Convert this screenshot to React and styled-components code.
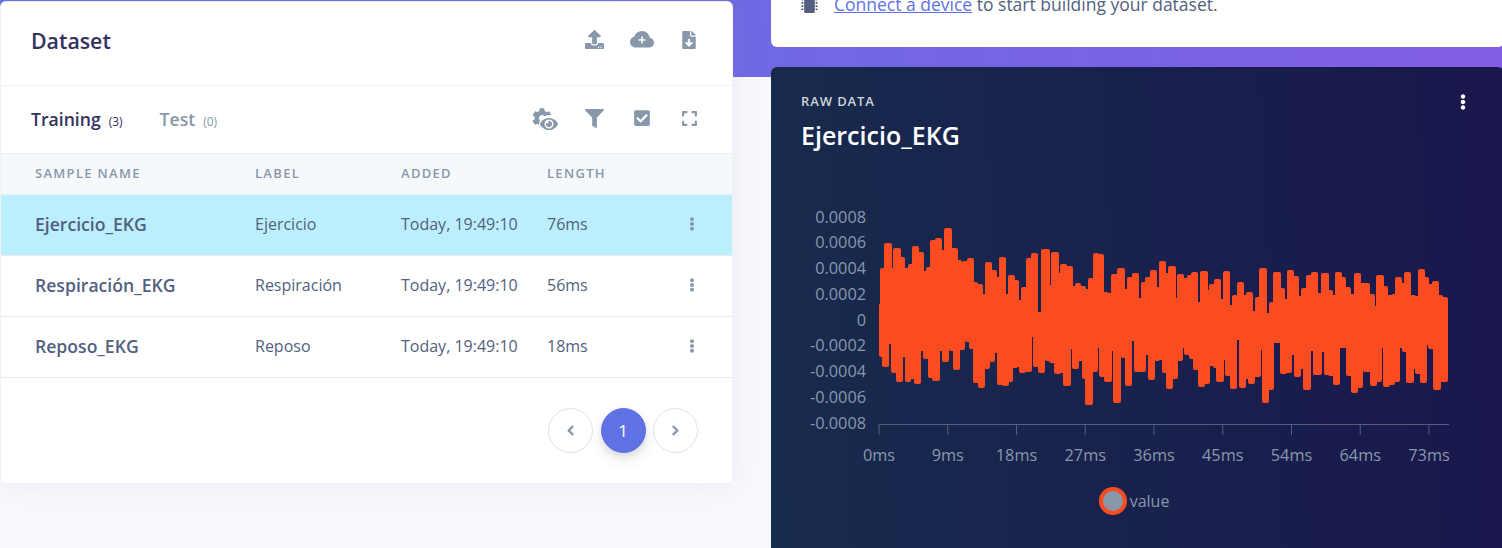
import styled, { createGlobalStyle } from "styled-components";
import {
  FaUpload,
  FaFileDownload,
  FaCog,
  FaEye,
  FaFilter,
  FaCheckSquare,
  FaExpand,
  FaChevronLeft,
  FaChevronRight,
  FaEllipsisV,
  FaMicrochip,
} from "react-icons/fa";
import { BsCloudPlusFill } from "react-icons/bs";

const samples = [
  { name: "Ejercicio_EKG", label: "Ejercicio", length: "76ms", selected: true },
  { name: "Respiración_EKG", label: "Respiración", length: "56ms" },
  { name: "Reposo_EKG", label: "Reposo", length: "18ms" },
];

// outline of the trace, read off the reference: [x where the step starts, y]
const upper = [
  [879, 303], [881, 268], [885, 243], [891, 268], [894, 248], [900, 257], [904, 268], [909, 264],
  [913, 246], [918, 252], [923, 271], [927, 267], [931, 240], [936, 238], [941, 250], [945, 228],
  [951, 248], [957, 260], [961, 273], [963, 261], [968, 258], [973, 282], [977, 284], [982, 294],
  [986, 262], [991, 270], [996, 277], [1000, 257], [1005, 294], [1009, 275], [1014, 280], [1018, 300],
  [1022, 287], [1027, 258], [1032, 253], [1037, 312], [1042, 249], [1049, 285], [1052, 252], [1058, 273],
  [1061, 264], [1066, 266], [1072, 286], [1076, 283], [1080, 286], [1085, 289], [1089, 278], [1094, 253],
  [1098, 254], [1103, 292], [1108, 293], [1112, 274], [1117, 292], [1118, 268], [1124, 289], [1128, 277],
  [1133, 273], [1138, 298], [1142, 282], [1146, 277], [1151, 270], [1156, 287], [1160, 261], [1165, 273],
  [1169, 266], [1175, 298], [1178, 274], [1183, 278], [1188, 275], [1192, 272], [1197, 302], [1201, 271],
  [1207, 290], [1210, 284], [1215, 279], [1220, 299], [1224, 271], [1229, 305], [1233, 295], [1238, 282],
  [1243, 295], [1247, 292], [1252, 311], [1256, 297], [1260, 268], [1266, 313], [1270, 302], [1274, 272],
  [1280, 288], [1284, 299], [1288, 270], [1293, 276], [1298, 296], [1302, 288], [1307, 275], [1312, 272],
  [1317, 307], [1318, 293], [1322, 273], [1328, 290], [1332, 295], [1336, 272], [1341, 277], [1345, 287],
  [1350, 294], [1355, 273], [1360, 283], [1364, 283], [1369, 294], [1374, 306], [1377, 275], [1383, 286],
  [1387, 295], [1392, 294], [1396, 277], [1401, 283], [1405, 272], [1410, 295], [1415, 296], [1419, 269],
  [1424, 277], [1428, 284], [1433, 281], [1438, 295], [1442, 297], [1447, 340],
];

const lower = [
  [879, 357], [883, 367], [888, 344], [892, 373], [897, 382], [902, 357], [906, 382], [910, 379],
  [915, 384], [920, 351], [924, 359], [929, 378], [933, 381], [939, 351], [943, 362], [948, 332],
  [950, 351], [954, 370], [959, 350], [964, 322], [966, 342], [970, 349], [974, 383], [979, 388],
  [984, 369], [989, 362], [994, 353], [998, 385], [1003, 386], [1008, 382], [1012, 368], [1017, 367],
  [1020, 373], [1025, 372], [1031, 337], [1034, 367], [1039, 373], [1044, 337], [1046, 361], [1050, 363],
  [1055, 374], [1060, 373], [1064, 386], [1070, 349], [1073, 369], [1078, 361], [1083, 379], [1086, 405],
  [1092, 372], [1097, 348], [1100, 377], [1105, 382], [1111, 351], [1114, 403], [1120, 350], [1122, 358],
  [1126, 386], [1131, 341], [1135, 372], [1140, 372], [1145, 355], [1149, 380], [1154, 361], [1159, 360],
  [1163, 373], [1167, 389], [1172, 379], [1177, 361], [1182, 348], [1185, 355], [1190, 359], [1194, 370],
  [1199, 387], [1204, 384], [1209, 366], [1214, 368], [1217, 382], [1223, 360], [1226, 376], [1231, 389],
  [1236, 340], [1240, 388], [1245, 379], [1249, 384], [1254, 377], [1260, 350], [1263, 403], [1268, 390],
  [1273, 343], [1281, 374], [1286, 373], [1291, 355], [1295, 377], [1300, 369], [1304, 390], [1310, 351],
  [1314, 375], [1321, 352], [1325, 375], [1329, 376], [1334, 385], [1339, 348], [1347, 376], [1352, 393],
  [1357, 388], [1362, 345], [1364, 372], [1371, 386], [1376, 382], [1381, 348], [1384, 387], [1389, 385],
  [1394, 382], [1399, 348], [1403, 352], [1407, 383], [1413, 369], [1416, 374], [1421, 383], [1426, 345],
  [1429, 349], [1434, 390], [1440, 382], [1444, 382],
];

const STROKE = 4;
const EDGE_INSET = 1;
const START_X = 879;
const END_X = 1448;

// a staircase from the steps; each edge is moved inward so that the round stroke
// ends up on the traced outline. taller(a, b) says b reaches further out than a
function stairs(steps, taller, offset) {
  const edge = (i) => steps[i][0] + (taller(steps[i - 1][1], steps[i][1]) ? EDGE_INSET : -EDGE_INSET);
  const pts = [];
  steps.forEach(([, y], i) => {
    const left = i > 0 ? edge(i) : START_X + STROKE / 2;
    const right = i + 1 < steps.length ? edge(i + 1) : END_X - STROKE / 2;
    pts.push([left, y + offset], [right, y + offset]);
  });
  return pts;
}

function tracePath() {
  const top = stairs(upper, (a, b) => b < a, STROKE / 2);
  const bottom = stairs(lower, (a, b) => b > a, -STROKE / 2).reverse();
  const pts = [...top, ...bottom];
  return pts.map(([x, y], i) => `${i === 0 ? "M" : "L"}${x} ${y}`).join("") + "Z";
}

const yTicks = ["0.0008", "0.0006", "0.0004", "0.0002", "0", "-0.0002", "-0.0004", "-0.0006", "-0.0008"];
const xTicks = ["0ms", "9ms", "18ms", "27ms", "36ms", "45ms", "54ms", "64ms", "73ms"];

const GlobalStyle = createGlobalStyle`
  html, body {
    margin: 0;
    padding: 0;
    background: #f8f9fe;
  }
  body {
    font-family: "Open Sans", sans-serif;
  }
`;

const Page = styled.div`
  display: grid;
  grid-template-columns: 733px 733px;
  column-gap: 38px;
  width: 1502px;
  height: 548px;
  overflow: hidden;
  background: linear-gradient(87deg, #5e72e4, #825ee4) top / 100% 77px no-repeat, #f8f9fe;
`;

const DatasetCard = styled.section`
  box-sizing: border-box;
  height: 483px;
  margin-top: 1px;
  background: #fff;
  border: 1px solid rgba(0, 0, 0, 0.05);
  border-radius: 6px;
  box-shadow: 0 0 32px 0 rgba(136, 152, 170, 0.15);
  overflow: hidden;
`;

const CardHeader = styled.header`
  display: flex;
  align-items: center;
  justify-content: space-between;
  box-sizing: border-box;
  height: 84px;
  padding: 0 19px 6px 30px;
  border-bottom: 1px solid #eff1f4;
`;

const CardTitle = styled.h3`
  margin: 0;
  font-size: 21.3px;
  font-weight: 600;
  line-height: 28px;
  color: #32325d;
`;

const ToolRow = styled.div`
  display: flex;
  align-items: center;
  margin-bottom: 2px;
`;

const ToolIcon = styled.span`
  position: relative;
  display: flex;
  align-items: center;
  justify-content: center;
  box-sizing: border-box;
  width: 47.5px;
  height: 24px;
  padding-right: ${(p) => p.$inset || 0}px;
  color: #8898aa;
  font-size: ${(p) => p.$size || 16}px;
`;

const EyeBadge = styled.span`
  position: absolute;
  left: 16px;
  top: 9px;
  display: flex;
  padding: 0 1px;
  font-size: 18px;
  line-height: 0;
  background: #fff;
  border-radius: 50%;
`;

const TabBar = styled.div`
  display: flex;
  align-items: center;
  justify-content: space-between;
  box-sizing: border-box;
  height: 68px;
  padding: 0 19px 1px 30px;
  border-bottom: 1px solid #e9ecef;
`;

const Tabs = styled.div`
  display: flex;
  align-items: baseline;
  gap: 37px;
`;

const Tab = styled.span`
  font-size: 17.6px;
  font-weight: 600;
  color: ${(p) => (p.$active ? "#32325d" : "#8898aa")};
`;

const TabCount = styled.small`
  margin-left: 8px;
  font-size: 12px;
  font-weight: 400;
`;

const tableColumns = `
  display: grid;
  grid-template-columns: 220px 146px 146px 1fr 14px;
  align-items: center;
  padding: 0 33px 0 34px;
`;

const TableHead = styled.div`
  ${tableColumns}
  padding-bottom: 2px;
  height: 41px;
  background: #f6f9fc;
  border-bottom: 1px solid #e9ecef;
  box-sizing: border-box;
  font-size: 13px;
  font-weight: 600;
  letter-spacing: 1.3px;
  text-transform: uppercase;
  color: #8898aa;
`;

const Row = styled.div`
  ${tableColumns}
  padding-bottom: 3px;
  box-sizing: border-box;
  height: 61px;
  font-size: 16px;
  color: #525f7f;
  background: ${(p) => (p.$selected ? "#bceffc" : "#fff")};
  border-bottom: 1px solid #e9ecef;
`;

const SampleName = styled.span`
  font-size: 17.6px;
  font-weight: 600;
`;

const RowMenu = styled.span`
  display: flex;
  justify-content: center;
  color: #8898aa;
  font-size: 14px;
`;

const Pagination = styled.nav`
  display: flex;
  justify-content: flex-end;
  gap: 7.5px;
  padding: 30px 34px 0 0;
`;

const PageButton = styled.span`
  display: flex;
  align-items: center;
  justify-content: center;
  box-sizing: border-box;
  width: 45px;
  height: 45px;
  border-radius: 50%;
  font-size: 17px;
  font-weight: 400;
  color: ${(p) => (p.$active ? "#fff" : "#8898aa")};
  background: ${(p) => (p.$active ? "#5e72e4" : "#fff")};
  border: 1px solid ${(p) => (p.$active ? "#5e72e4" : "#dee2e6")};
  box-shadow: ${(p) => (p.$active ? "0 7px 14px rgba(50, 50, 93, 0.1), 0 3px 6px rgba(0, 0, 0, 0.08)" : "none")};
  svg {
    font-size: 11px;
    stroke: currentColor;
    stroke-width: 40;
  }
`;

const RightColumn = styled.div`
  display: flex;
  flex-direction: column;
  gap: 20px;
`;

const NoticeCard = styled.div`
  display: flex;
  align-items: flex-end;
  gap: 16px;
  box-sizing: border-box;
  height: 47px;
  padding: 0 0 32px 30px;
  background: #fff;
  border-radius: 0 0 6px 6px;
  font-size: 17.5px;
  line-height: 22px;
  color: #525f7f;
  white-space: nowrap;
`;

const ChipIcon = styled.span`
  display: flex;
  height: 22px;
  align-items: center;
  font-size: 17px;
  color: #525f7f;
`;

const NoticeLink = styled.a`
  color: #5e72e4;
  text-decoration: underline;
`;

const ChartCard = styled.section`
  position: relative;
  height: 500px;
  padding: 25px 30px 0;
  background: linear-gradient(87deg, #172b4d, #1a174d);
  border-radius: 6px;
`;

const Overline = styled.h6`
  margin: 0;
  font-size: 13px;
  font-weight: 600;
  line-height: 18px;
  letter-spacing: 0.9px;
  text-transform: uppercase;
  color: #ced4da;
`;

const ChartTitle = styled.h2`
  margin: 9px 0 0;
  font-size: 25px;
  font-weight: 600;
  line-height: 32px;
  color: #fff;
`;

const ChartMenu = styled.span`
  position: absolute;
  top: 27px;
  right: 33px;
  color: #fff;
  font-size: 16px;
  line-height: 0;
`;

const ChartSvg = styled.svg`
  display: block;
  margin: 53px 0 0 -30px;
  overflow: visible;
`;

const AxisText = styled.text`
  font-family: "Open Sans", sans-serif;
  font-size: 16.3px;
  fill: #8898aa;
`;

const Legend = styled.div`
  display: flex;
  align-items: center;
  justify-content: center;
  gap: 3px;
  margin-top: 15px;
  margin-left: -7px;
  font-size: 16px;
  color: #8898aa;
`;

const LegendDot = styled.span`
  box-sizing: border-box;
  width: 28px;
  height: 28px;
  background: #8898aa;
  border: 4px solid #fb4c21;
  border-radius: 50%;
`;

function RawChart() {
  // the viewBox uses page coordinates, which keeps the traced outline readable
  return (
    <ChartSvg width="731" height="268" viewBox="771 204 731 268">
      {yTicks.map((t, i) => (
        <AxisText key={t} x="866" y={222.5 + i * 25.75} textAnchor="end">{t}</AxisText>
      ))}
      <path d="M879 424.5H1449" stroke="#525f7f" strokeWidth="1" fill="none" />
      {xTicks.map((t, i) => {
        const x = 879 + i * 68.75;
        return (
          <g key={t}>
            <path d={`M${x} 424V435`} stroke="#525f7f" strokeWidth="1" />
            <AxisText x={x} y="461" textAnchor="middle">{t}</AxisText>
          </g>
        );
      })}
      <path d={tracePath()} fill="#fb4c21" stroke="#fb4c21" strokeWidth={STROKE} strokeLinejoin="round" />
    </ChartSvg>
  );
}

export default function App() {
  return (
    <>
      <GlobalStyle />
      <Page>
        <DatasetCard>
          <CardHeader>
            <CardTitle>Dataset</CardTitle>
            <ToolRow>
              <ToolIcon $size={19}><FaUpload /></ToolIcon>
              <ToolIcon $size={24}><BsCloudPlusFill /></ToolIcon>
              <ToolIcon $size={18}><FaFileDownload /></ToolIcon>
            </ToolRow>
          </CardHeader>
          <TabBar>
            <Tabs>
              <Tab $active>Training<TabCount>(3)</TabCount></Tab>
              <Tab>Test<TabCount>(0)</TabCount></Tab>
            </Tabs>
            <ToolRow>
              <ToolIcon $size={20} $inset={10}>
                <FaCog />
                <EyeBadge><FaEye /></EyeBadge>
              </ToolIcon>
              <ToolIcon $size={19}><FaFilter /></ToolIcon>
              <ToolIcon $size={18}><FaCheckSquare /></ToolIcon>
              <ToolIcon $size={17}><FaExpand /></ToolIcon>
            </ToolRow>
          </TabBar>
          <TableHead>
            <span>Sample name</span>
            <span>Label</span>
            <span>Added</span>
            <span>Length</span>
            <span />
          </TableHead>
          {samples.map((s) => (
            <Row key={s.name} $selected={s.selected}>
              <SampleName>{s.name}</SampleName>
              <span>{s.label}</span>
              <span>Today, 19:49:10</span>
              <span>{s.length}</span>
              <RowMenu><FaEllipsisV /></RowMenu>
            </Row>
          ))}
          <Pagination>
            <PageButton><FaChevronLeft /></PageButton>
            <PageButton $active>1</PageButton>
            <PageButton><FaChevronRight /></PageButton>
          </Pagination>
        </DatasetCard>
        <RightColumn>
          <NoticeCard>
            <ChipIcon><FaMicrochip /></ChipIcon>
            <span><NoticeLink href="#">Connect a device</NoticeLink> to start building your dataset.</span>
          </NoticeCard>
          <ChartCard>
            <Overline>Raw data</Overline>
            <ChartTitle>Ejercicio_EKG</ChartTitle>
            <ChartMenu><FaEllipsisV /></ChartMenu>
            <RawChart />
            <Legend>
              <LegendDot />
              <span>value</span>
            </Legend>
          </ChartCard>
        </RightColumn>
      </Page>
    </>
  );
}
